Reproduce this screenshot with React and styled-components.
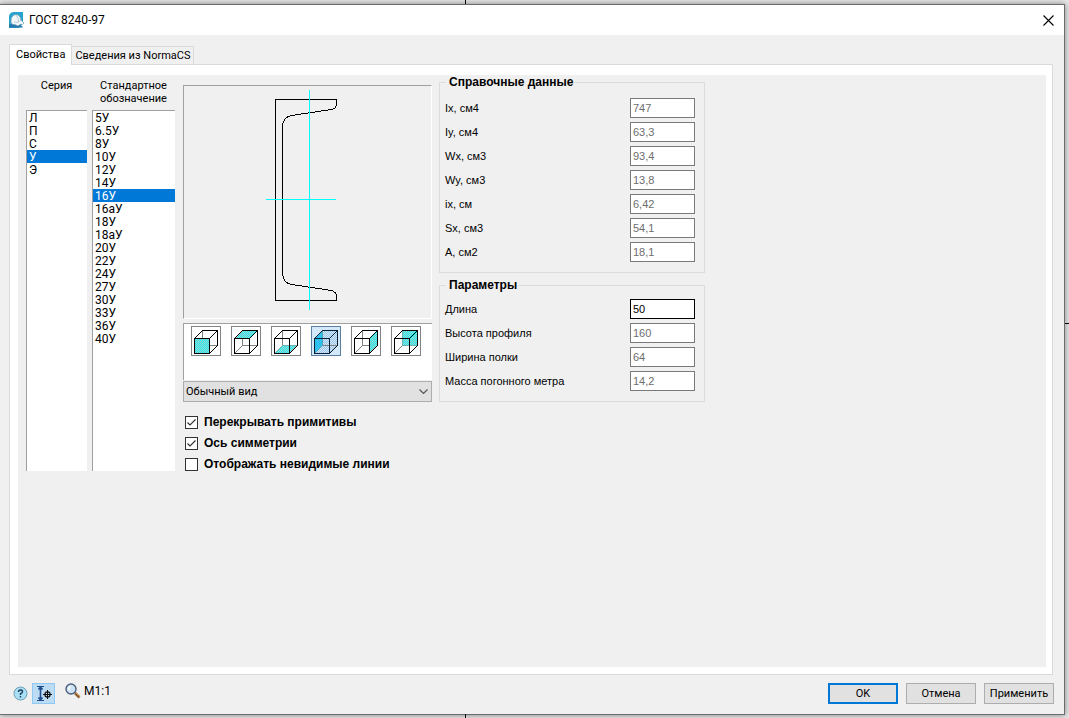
import React, { useState } from "react";
import styled, { createGlobalStyle } from "styled-components";

// data
const series = ["Л", "П", "С", "У", "Э"];
const marks = [
  "5У",
  "6.5У",
  "8У",
  "10У",
  "12У",
  "14У",
  "16У",
  "16аУ",
  "18У",
  "18аУ",
  "20У",
  "22У",
  "24У",
  "27У",
  "30У",
  "33У",
  "36У",
  "40У",
];
const reference = [
  { id: "ix4", label: "Ix, см4", value: "747" },
  { id: "iy4", label: "Iy, см4", value: "63,3" },
  { id: "wx", label: "Wx, см3", value: "93,4" },
  { id: "wy", label: "Wy, см3", value: "13,8" },
  { id: "ix", label: "ix, см", value: "6,42" },
  { id: "sx", label: "Sx, см3", value: "54,1" },
  { id: "area", label: "A, см2", value: "18,1" },
];
const params = [
  { id: "len", label: "Длина", value: "50", editable: true },
  { id: "height", label: "Высота профиля", value: "160" },
  { id: "width", label: "Ширина полки", value: "64" },
  { id: "mass", label: "Масса погонного метра", value: "14,2" },
];
const views = [
  { name: "Спереди", face: "3.5,12.5 18.5,12.5 18.5,27.5 3.5,27.5" },
  { name: "Сверху", face: "3.5,12.5 11.5,4.5 26.5,4.5 18.5,12.5" },
  { name: "Снизу", face: "3.5,27.5 11.5,19.5 26.5,19.5 18.5,27.5" },
  { name: "Слева", face: "3.5,12.5 11.5,4.5 11.5,19.5 3.5,27.5" },
  { name: "Справа", face: "18.5,12.5 26.5,4.5 26.5,19.5 18.5,27.5" },
  { name: "Сзади", face: "11.5,4.5 26.5,4.5 26.5,19.5 11.5,19.5" },
];

function Cube({ face, index, active }) {
  const dot = active ? "#48b8e4" : "#b8c4c4";
  return (
    <svg width="28" height="28" viewBox="1 1 28 28" fill="none">
      <defs>
        <pattern id={`dots${index}`} width="2" height="2" patternUnits="userSpaceOnUse">
          <rect width="2" height="2" fill={active ? "#12c8f4" : "#00ffff"} />
          <rect width="1" height="1" fill={dot} />
          <rect x="1" y="1" width="1" height="1" fill={dot} />
        </pattern>
        <pattern id={`haze${index}`} width="2" height="2" patternUnits="userSpaceOnUse">
          <rect width="1" height="1" fill="#9cc4e6" />
          <rect x="1" y="1" width="1" height="1" fill="#9cc4e6" />
        </pattern>
      </defs>
      {active && (
        <path d="M3.5 12.5L11.5 4.5H26.5V19.5L18.5 27.5H3.5Z" fill={`url(#haze${index})`} />
      )}
      {index !== 0 && <path d="M3.5 27.5L11.5 19.5" stroke="#808080" />}
      <path d="M11.5 4.5V19.5H26.5" stroke="#808080" shapeRendering="crispEdges" />
      <polygon points={face} fill={`url(#dots${index})`} />
      <path
        d="M3.5 12.5L11.5 4.5M18.5 12.5L26.5 4.5M18.5 27.5L26.5 19.5"
        stroke={active ? "#06203c" : "#000"}
      />
      <path
        d="M3.5 12.5H18.5V27.5H3.5ZM11 4.5H26.5V20"
        stroke={active ? "#06203c" : "#000"}
        shapeRendering="crispEdges"
      />
    </svg>
  );
}

function Profile() {
  return (
    <svg width="247" height="232" viewBox="0 0 247 232" fill="none" shapeRendering="crispEdges">
      <path
        d="M91.5 13.5H152.5V18.5Q152 23 147.5 23.5L107.5 29.5Q98.5 31.5 98.5 40.5V187.5Q99 197 107.5 198.5L147.5 204.5Q152 206 152.5 210V214.5H91.5Z"
        stroke="#000"
      />
      <path d="M125.5 4V224M82 113.5H152" stroke="#00ffff" />
    </svg>
  );
}

function Field({ item }) {
  return (
    <FieldRow>
      <label htmlFor={item.id}>{item.label}</label>
      <FieldInput id={item.id} defaultValue={item.value} disabled={!item.editable} />
    </FieldRow>
  );
}

function Check({ label, initial }) {
  const [on, setOn] = useState(initial);
  return (
    <CheckRow>
      <CheckMark>
        <input type="checkbox" checked={on} onChange={() => setOn(!on)} />
        {on && (
          <svg width="13" height="13" viewBox="0 0 13 13" fill="none">
            <path d="M2.5 6.5L5 9L10.5 3.5" stroke="#333" strokeWidth="1.2" />
          </svg>
        )}
      </CheckMark>
      {label}
    </CheckRow>
  );
}

function App() {
  const [serie, setSerie] = useState("У");
  const [mark, setMark] = useState("16У");
  const [view, setView] = useState(3);

  return (
    <Desktop>
      <GlobalStyle />
      <Tick $side="top" />
      <Tick $side="bottom" />
      <Tick $side="right" />
      <Dialog>
        <TitleBar>
          <svg width="16" height="16" viewBox="0 0 16 16">
            <path d="M0 4Q1 0 5 0H14V11L10 16H0Z" fill="#27a3cf" />
            <path d="M0 13L3 11L12 13L14 15.5H0Z" fill="#2577ae" />
            <path
              d="M2 9Q2 3 7 2.5Q11 2.5 12 8L15 11Q14 13 11 12.5L9 14Q6 12 4 12.5Q1.500 11.500 2 9Z"
              fill="#f2f8fa"
              stroke="#6a98ac"
              strokeWidth="0.7"
            />
            <path d="M5 10Q9 12 12 8M7 3Q10 6 9.500 10" fill="none" stroke="#9ab9c5" strokeWidth="0.7" />
          </svg>
          <h1>ГОСТ 8240-97</h1>
          <CloseButton aria-label="Закрыть">
            <svg width="11" height="11" viewBox="0 0 11 11">
              <path d="M0.500 0.500L10.500 10.500M10.500 0.500L0.500 10.500" stroke="#000" strokeWidth="1.1" />
            </svg>
          </CloseButton>
        </TitleBar>

        <Body>
          <Tabs role="tablist">
            <Tab role="tab" aria-selected="true" $active>
              Свойства
            </Tab>
            <Tab role="tab" aria-selected="false">
              Сведения из NormaCS
            </Tab>
          </Tabs>
          <Panel>
            <Content>
              <Lists>
                <ListColumn $width={61}>
                  <label htmlFor="series">Серия</label>
                  <ListBox
                    id="series"
                    size={20}
                    value={serie}
                    onChange={(e) => setSerie(e.target.value)}
                  >
                    {series.map((name) => (
                      <option key={name}>{name}</option>
                    ))}
                  </ListBox>
                </ListColumn>
                <ListColumn $width={83}>
                  <label htmlFor="marks">Стандартное обозначение</label>
                  <ListBox
                    id="marks"
                    size={20}
                    value={mark}
                    onChange={(e) => setMark(e.target.value)}
                  >
                    {marks.map((name) => (
                      <option key={name}>{name}</option>
                    ))}
                  </ListBox>
                </ListColumn>
              </Lists>

              <Middle>
                <Preview>
                  <Profile />
                </Preview>
                <ViewBar>
                  {views.map((item, i) => (
                    <ViewButton
                      key={item.name}
                      aria-label={item.name}
                      $active={i === view}
                      onClick={() => setView(i)}
                    >
                      <Cube face={item.face} index={i} active={i === view} />
                    </ViewButton>
                  ))}
                </ViewBar>
                <Dropdown>
                  <select aria-label="Вид">
                    <option>Обычный вид</option>
                  </select>
                  <svg width="9" height="6" viewBox="0 0 9 6" fill="none">
                    <path d="M0.500 0.500L4.500 4.500L8.500 0.500" stroke="#555" strokeWidth="1.2" />
                  </svg>
                </Dropdown>
                <Checks>
                  <Check label="Перекрывать примитивы" initial={true} />
                  <Check label="Ось симметрии" initial={true} />
                  <Check label="Отображать невидимые линии" initial={false} />
                </Checks>
              </Middle>

              <Groups>
                <Group $top={9}>
                  <legend>Справочные данные</legend>
                  {reference.map((item) => (
                    <Field key={item.id} item={item} />
                  ))}
                </Group>
                <Group $top={7}>
                  <legend>Параметры</legend>
                  {params.map((item) => (
                    <Field key={item.id} item={item} />
                  ))}
                </Group>
              </Groups>
            </Content>
          </Panel>

          <Footer>
            <IconButton aria-label="Справка">
              <svg width="15" height="15" viewBox="0 0 15 15">
                <circle cx="7.5" cy="7.5" r="6.5" fill="#a9def7" stroke="#6f9fb5" />
                <path
                  d="M5.500 6Q5.500 4 7.500 4Q9.500 4 9.500 5.700Q9.500 7 7.500 7.700V9M7.500 10V11.500"
                  fill="none"
                  stroke="#1d3d55"
                  strokeWidth="1.4"
                />
              </svg>
            </IconButton>
            <IconButton aria-label="Привязка" $pressed>
              <svg width="21" height="19" viewBox="0 0 21 19" fill="none">
                <path d="M4 2.500H11M4 16.500H11" stroke="#1f4e8c" strokeWidth="1" />
                <path d="M7.500 3V16M5.500 5.500L7.500 3L9.500 5.500M5.500 13.500L7.500 16L9.500 13.500" stroke="#1f4e8c" strokeWidth="1.6" />
                <path d="M10 10.500H19M14.500 6V15" stroke="#111" />
                <circle cx="14.5" cy="10.5" r="2.6" stroke="#111" strokeWidth="1.2" />
              </svg>
            </IconButton>
            <Scale>
              <svg width="16" height="16" viewBox="0 0 16 16">
                <path d="M10 10L14.500 14.500" stroke="#8a5a2c" strokeWidth="2.6" />
                <path d="M10.500 9.500L15 13.500" stroke="#d9a05c" strokeWidth="1" />
                <circle cx="6" cy="6" r="5" fill="#cfe3f3" stroke="#4a5f7c" strokeWidth="1.4" />
                <path d="M3 6Q3 3 6.500 2.800Q4 5 5 8Z" fill="#fff" />
              </svg>
              M1:1
            </Scale>
            <Actions>
              <Button $primary>OK</Button>
              <Button>Отмена</Button>
              <Button>Применить</Button>
            </Actions>
          </Footer>
        </Body>
      </Dialog>
    </Desktop>
  );
}

const GlobalStyle = createGlobalStyle`
  * {
    box-sizing: border-box;
  }
  body {
    margin: 0;
    background: #e6e6e6;
    color: #000;
    font: 11px/13px Roboto, sans-serif;
  }
  button, input, select {
    margin: 0;
    color: inherit;
    font: inherit;
  }
  svg {
    display: block;
    flex: none;
  }
`;
const Desktop = styled.div`
  position: relative;
  display: flex;
  min-height: 100vh;
  padding: 4px 4px 3px 0;
  overflow: hidden;
`;
// drawing axes that stick out from behind the dialog
const Tick = styled.span`
  position: absolute;
  background: #000;
  z-index: 1;
  ${({ $side }) =>
    $side === "right"
      ? "right: 0; top: 45%; width: 4px; height: 1px;"
      : `${$side}: 0; left: 43.5%; width: 1px; height: 4px;`}
`;
const Dialog = styled.div`
  display: flex;
  flex-direction: column;
  flex: 1;
  background: #f0f0f0;
  border: 1px solid #6c6c6c;
  border-left: none;
  box-shadow: 0 0 6px rgba(0, 0, 0, 0.45);
`;
const TitleBar = styled.header`
  display: flex;
  align-items: center;
  gap: 4px;
  height: 30px;
  padding: 0 10px 0 9px;
  background: #fff;
  h1 {
    flex: 1;
    margin: 0;
    font-size: 12px;
    font-weight: 400;
    line-height: 16px;
  }
`;
const CloseButton = styled.button`
  padding: 0;
  border: none;
  background: none;
`;
const Body = styled.main`
  display: flex;
  flex-direction: column;
  flex: 1;
  padding: 9px 10px 10px 9px;
`;
const Tabs = styled.div`
  display: flex;
  align-items: flex-end;
`;
const Tab = styled.button`
  height: ${({ $active }) => ($active ? 21 : 18)}px;
  margin-bottom: ${({ $active }) => ($active ? -1 : 0)}px;
  padding: ${({ $active }) => ($active ? "0 6px 1px" : "0 3px")};
  border: 1px solid #dadada;
  border-bottom: none;
  border-left-width: ${({ $active }) => ($active ? 1 : 0)}px;
  background: ${({ $active }) => ($active ? "#fff" : "#f0f0f0")};
  z-index: ${({ $active }) => ($active ? 1 : 0)};
`;
const Panel = styled.section`
  display: flex;
  flex: 1;
  margin-right: 1px;
  padding: 10px 6px 7px 8px;
  border: 1px solid #dadada;
  background: #fff;
`;
const Content = styled.div`
  display: flex;
  align-items: flex-start;
  flex: 1;
  padding-left: 8px;
  background: #f0f0f0;
`;
const Lists = styled.div`
  display: flex;
  gap: 5px;
  padding-top: 4px;
  margin-right: 8px;
`;
const ListColumn = styled.div`
  display: flex;
  flex-direction: column;
  width: ${({ $width }) => $width}px;
  label {
    height: 31px;
    text-align: center;
  }
`;
const ListBox = styled.select`
  height: 361px;
  padding: 0;
  overflow: hidden;
  border: solid #a0a0a0;
  border-width: 1px 0 0 1px;
  border-radius: 0;
  outline: none;
  background: #fff;
  font-size: 12px;
  option {
    height: 13px;
    min-height: 13px;
    padding: 0 2px;
    line-height: 13px;
  }
  option:checked {
    background: #0078d7 linear-gradient(#0078d7, #0078d7);
    color: #fff;
    -webkit-text-fill-color: #fff;
  }
`;
const Middle = styled.div`
  display: flex;
  flex-direction: column;
  width: 249px;
  padding-top: 10px;
  margin-right: 7px;
`;
const Preview = styled.div`
  border: 1px solid;
  border-color: #a0a0a0 #fff #fff #a0a0a0;
`;
const ViewBar = styled.div`
  display: flex;
  gap: 10px;
  height: 57px;
  margin: 4px 0 1px;
  padding: 2px 7px;
  border: solid #a0a0a0;
  border-width: 1px 0 0 1px;
  background: #fff;
`;
const ViewButton = styled.button`
  width: 30px;
  height: 30px;
  padding: 0;
  border: 1px solid ${({ $active }) => ($active ? "#5b7f9f" : "#838383")};
  background: ${({ $active }) => ($active ? "#d3e8f8" : "#fff")};
`;
const Dropdown = styled.div`
  display: grid;
  align-items: center;
  select {
    grid-area: 1 / 1;
    height: 21px;
    padding: 0 2px;
    appearance: none;
    border: 1px solid #adadad;
    border-radius: 0;
    background: #e1e1e1;
  }
  svg {
    grid-area: 1 / 1;
    justify-self: end;
    margin-right: 4px;
    pointer-events: none;
  }
`;
const Checks = styled.div`
  display: flex;
  flex-direction: column;
  gap: 8px;
  padding: 14px 2px;
`;
const CheckRow = styled.label`
  display: flex;
  align-items: center;
  gap: 6px;
  font-family: "Liberation Sans", sans-serif;
  font-size: 12px;
  font-weight: 700;
  white-space: nowrap;
`;
const CheckMark = styled.span`
  display: grid;
  input {
    grid-area: 1 / 1;
    width: 13px;
    height: 13px;
    appearance: none;
    border: 1px solid #333;
    background: #fff;
  }
  svg {
    grid-area: 1 / 1;
    pointer-events: none;
  }
`;
const Groups = styled.div`
  display: flex;
  flex-direction: column;
  gap: 6px;
  width: 266px;
  padding-top: 1px;
  font-family: "Liberation Sans", sans-serif;
`;
const Group = styled.fieldset`
  display: flex;
  flex-direction: column;
  gap: 4px;
  margin: 0;
  padding: ${({ $top }) => $top}px 9px 10px 5px;
  border: 1px solid #dcdcdc;
  legend {
    margin-left: 1px;
    padding: 0 1px 0 3px;
    font-size: 12px;
    font-weight: 700;
  }
`;
const FieldRow = styled.div`
  display: flex;
  align-items: center;
  justify-content: space-between;
`;
const FieldInput = styled.input`
  width: 65px;
  height: 20px;
  padding: 0 2px 1px;
  border: 1px solid #000;
  border-radius: 0;
  background: #fff;
  &:disabled {
    border-color: #7a7a7a;
    color: #6d6d6d;
  }
`;
const Footer = styled.footer`
  display: flex;
  align-items: center;
  padding: 8px 0 0 4px;
`;
const IconButton = styled.button`
  display: grid;
  place-items: center;
  width: ${({ $pressed }) => ($pressed ? 23 : 15)}px;
  height: 21px;
  margin-right: ${({ $pressed }) => ($pressed ? 10 : 4)}px;
  padding: 0;
  border: ${({ $pressed }) => ($pressed ? "1px solid #90c8f6" : "none")};
  background: ${({ $pressed }) => ($pressed ? "#bcdcf4" : "none")};
`;
const Scale = styled.span`
  display: flex;
  align-items: center;
  gap: 3px;
  padding-bottom: 5px;
  font-size: 12px;
`;
const Actions = styled.div`
  display: flex;
  gap: 8px;
  margin-left: auto;
`;
const Button = styled.button`
  width: 70px;
  height: 21px;
  padding: 0;
  border: ${({ $primary }) => ($primary ? "2px solid #0078d7" : "1px solid #adadad")};
  background: #e1e1e1;
`;

export default App;
